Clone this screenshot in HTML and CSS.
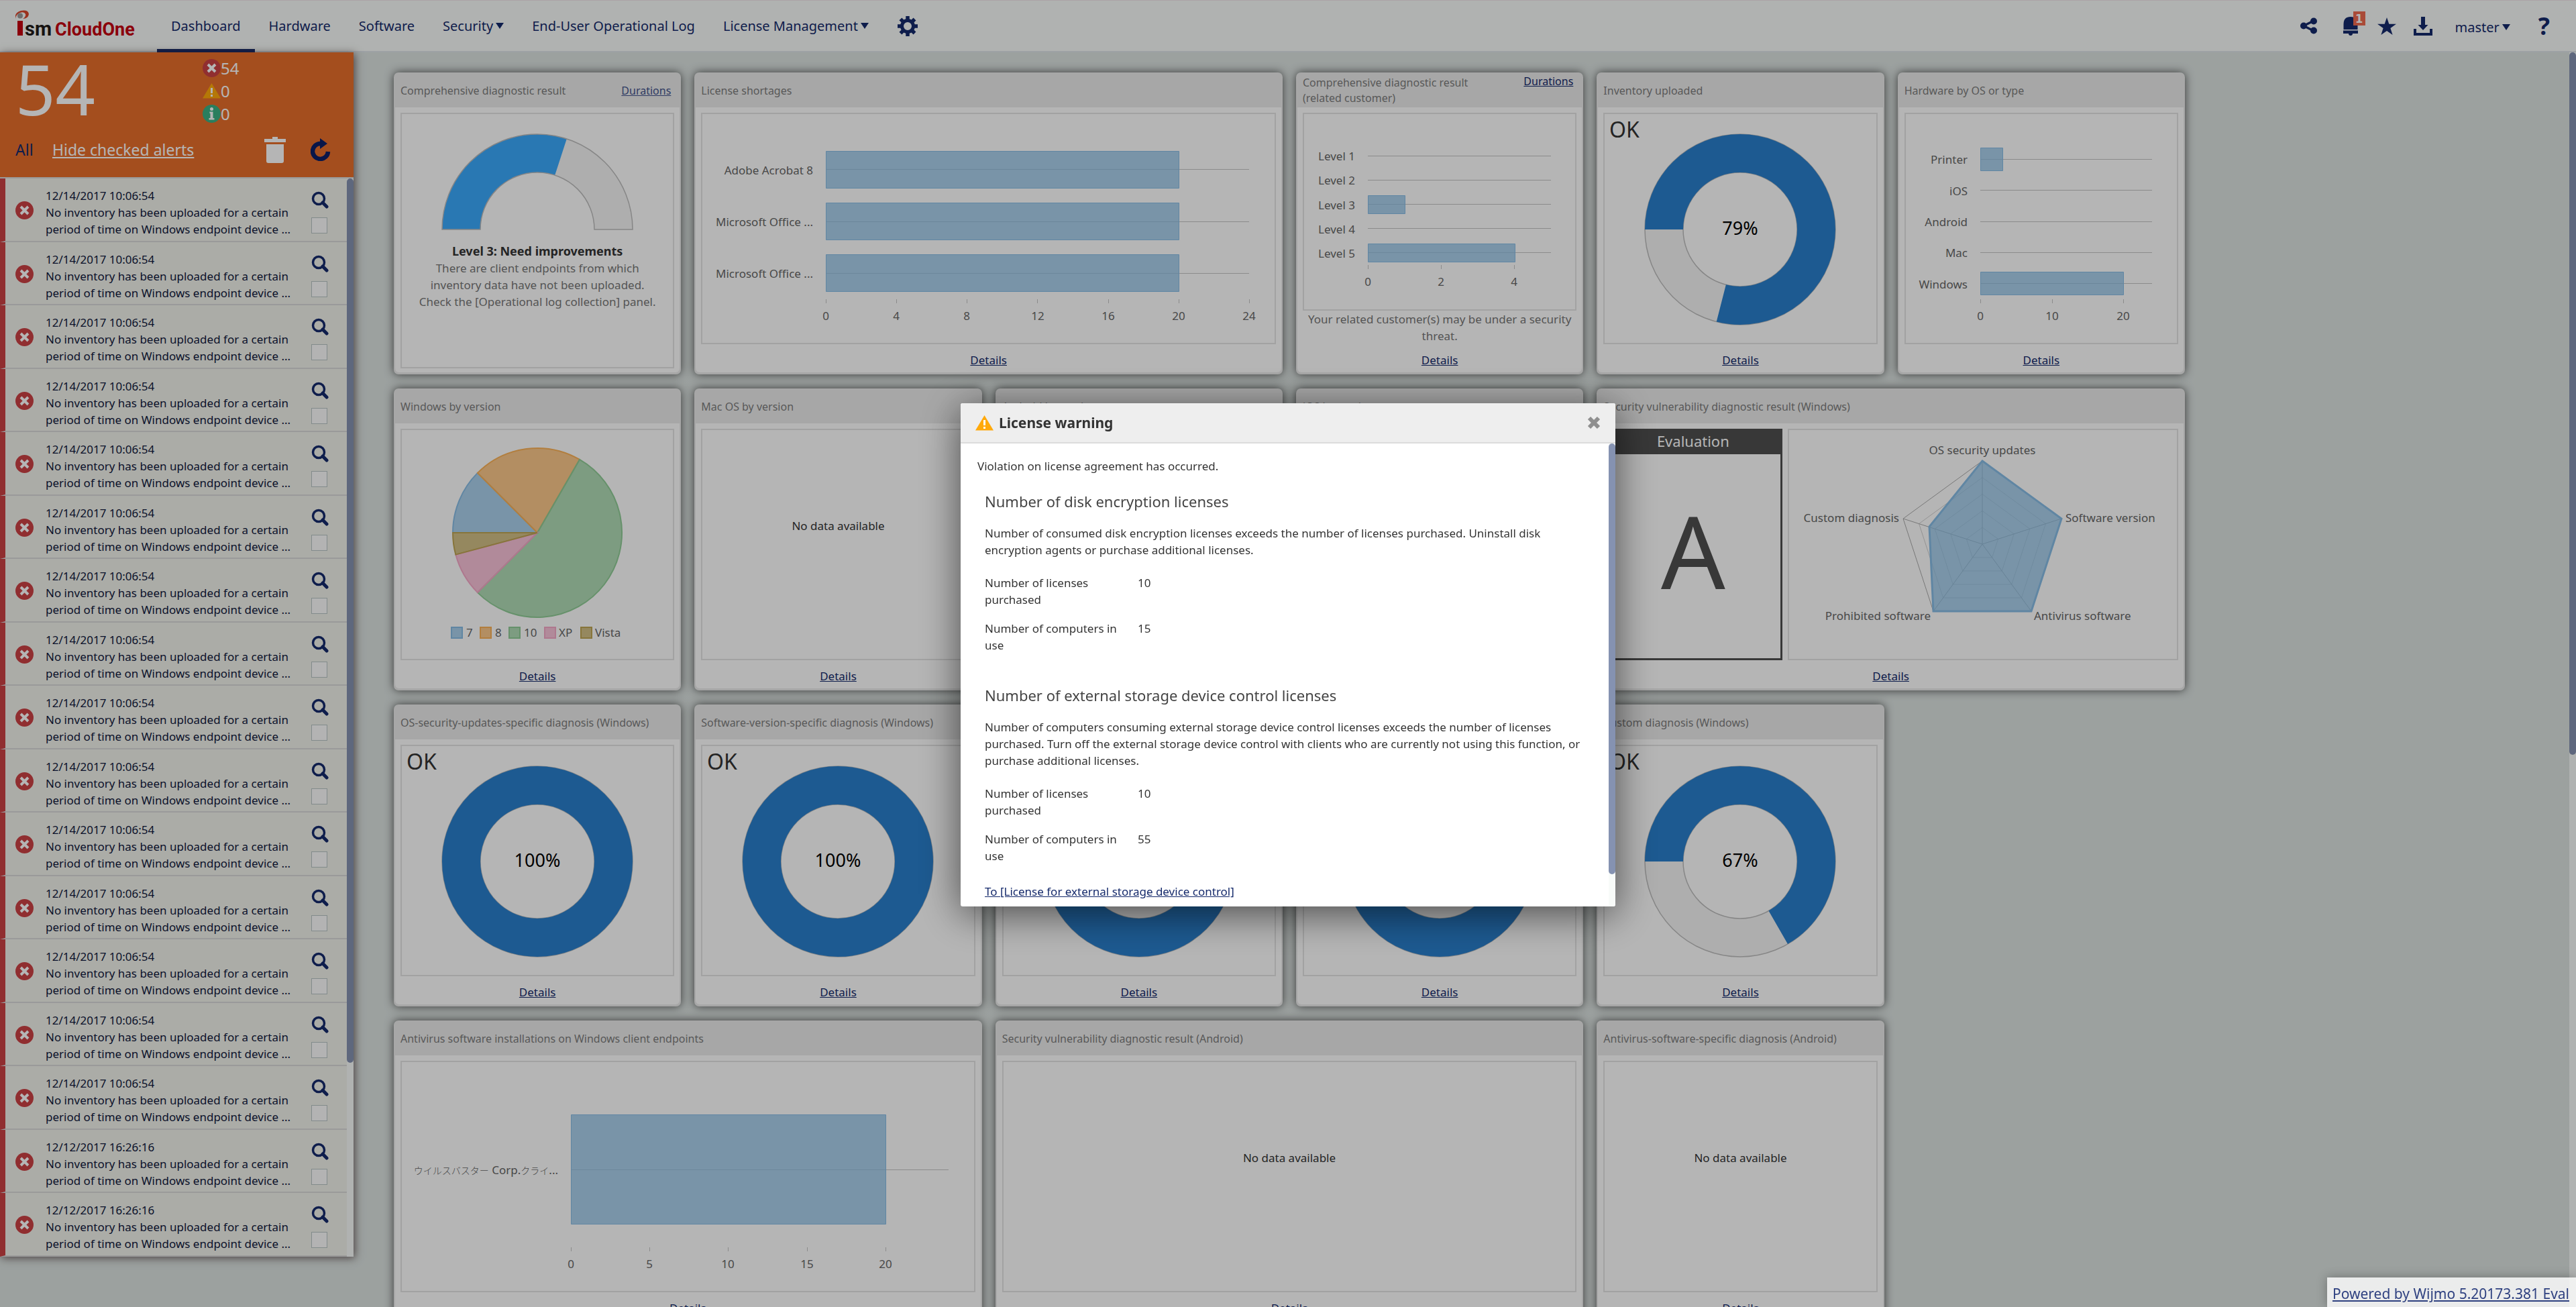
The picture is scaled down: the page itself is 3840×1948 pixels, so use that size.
FILE: index.html
```html
<!DOCTYPE html>
<html lang="en">
<head>
<meta charset="utf-8">
<title>ISM CloudOne - Dashboard</title>
<link rel="stylesheet" href="styles.css">
</head>
<body>
<svg class="sprite" aria-hidden="true">
  <symbol id="i-error" viewBox="0 0 27 27"><circle cx="13.5" cy="13.5" r="13.5" fill="#cb4144"/><path d="M8 8l11 11M19 8L8 19" stroke="#fff" stroke-width="4"/></symbol>
  <symbol id="i-warn" viewBox="0 0 27 27"><path d="M13.500 2L27 24.500H0z" fill="#ffa90a"/><path d="M13.500 9v8M13.500 19v3" stroke="#fff" stroke-width="3"/></symbol>
  <symbol id="i-info" viewBox="0 0 27 27"><circle cx="13.5" cy="13.5" r="13.500" fill="#3cb285"/><path d="M10.500 10.500H15.500V20H17.500V22.500H9.500V20H11.500V13H10.500z" fill="#fff"/><circle cx="13.500" cy="6.500" r="2.500" fill="#fff"/></symbol>
  <symbol id="i-trash" viewBox="0 0 32 39"><path d="M0 3h12V0h8v3h12v5H0zM3 11h26v25q0 3-3 3H6q-3 0-3-3z" fill="#fff"/></symbol>
  <symbol id="i-refresh" viewBox="0 0 30 34"><path d="M26 20A11.500 11.500 0 1 1 15 8" fill="none" stroke="#0e2068" stroke-width="6.500"/><path d="M14 0L25 8L14 16z" fill="#0e2068"/></symbol>
  <symbol id="i-search" viewBox="0 0 26 26"><circle cx="11" cy="11" r="8.500" fill="none" stroke="#152a6b" stroke-width="3.500"/><path d="M17 17l6 6" stroke="#152a6b" stroke-width="5" stroke-linecap="round"/></symbol>
  <symbol id="i-gear" viewBox="0 0 32 32"><circle cx="16" cy="16" r="8.500" fill="none" stroke="#152a6b" stroke-width="5"/><g stroke="#152a6b" stroke-width="5.500"><path d="M16 1v5M16 26v5M1 16h5M26 16h5M5.400 5.400l3.500 3.500M23 23l3.500 3.500M5.400 26.600l3.500-3.500M23 9l3.500-3.500"/></g></symbol>
  <symbol id="i-share" viewBox="0 0 28 28"><path d="M23 5L6 13.500L23 22" fill="none" stroke="#152a6b" stroke-width="3.500"/><g fill="#152a6b"><circle cx="6" cy="13.500" r="5"/><circle cx="21" cy="6.500" r="5"/><circle cx="21" cy="20.500" r="5"/></g></symbol>
  <symbol id="i-bell" viewBox="0 0 28 28"><path d="M3.500 19V11Q3.500 0 14 0T24.500 11V19zM3 20.500H25V25H17Q17 28 14 28T11 25H3z" fill="#152a6b"/></symbol>
  <symbol id="i-star" viewBox="0 0 28 28"><path d="M14 1l3.300 9.700L28 10.800l-8.600 6.300L22.600 27 14 21 5.400 27l3.200-9.900L0 10.800l10.700-.1z" fill="#152a6b"/></symbol>
  <symbol id="i-download" viewBox="0 0 28 28"><path d="M11 0h6v12h4.500L14 20 6.500 12H11zM0 18h4v6h20v-6h4v10H0z" fill="#152a6b"/></symbol>
  <symbol id="i-close" viewBox="0 0 20 20"><path d="M3 3l14 14M17 3L3 17" stroke="#8f8f8f" stroke-width="6"/></symbol>
  <symbol id="ring" viewBox="0 0 404 341"><circle cx="202" cy="172" r="113.500" fill="none" stroke="#f5f5f5" stroke-width="57"/><g fill="none" stroke="#bdbdbd" stroke-width="1.500"><circle cx="202" cy="172" r="142"/><circle cx="202" cy="172" r="85"/></g></symbol>
</svg>

<header class="topbar">
  <a class="logo" href="#" aria-label="ISM CloudOne">
    <svg width="20" height="38" viewBox="0 0 20 38" aria-hidden="true"><path d="M0 13Q-2 4 8 1Q19-1 20 6Q19 13 11 13Q16 10 15 6Q13 2 7 4Q1 6 0 13z" fill="#d9452b"/><circle cx="7" cy="8.500" r="4" fill="#9a9a9a"/><rect x="3" y="16" width="8" height="22" fill="#c40010"/></svg>
    <span class="logo-sm">sm</span><span class="logo-name">CloudOne</span>
  </a>
  <nav class="nav">
    <a class="active" href="#">Dashboard</a>
    <a href="#">Hardware</a>
    <a href="#">Software</a>
    <a href="#">Security<i class="caret"></i></a>
    <a href="#">End-User Operational Log</a>
    <a href="#">License Management<i class="caret"></i></a>
    <a href="#" class="gear" aria-label="Settings"><svg width="32" height="32"><use href="#i-gear"/></svg></a>
  </nav>
  <div class="tools">
    <button aria-label="Share"><svg width="28" height="28"><use href="#i-share"/></svg></button>
    <button class="bell" aria-label="Notifications"><svg width="28" height="28"><use href="#i-bell"/></svg><span class="badge">1</span></button>
    <button aria-label="Favorites"><svg width="28" height="28"><use href="#i-star"/></svg></button>
    <button aria-label="Downloads"><svg width="28" height="28"><use href="#i-download"/></svg></button>
    <button class="user">master<i class="caret"></i></button>
    <button class="help" aria-label="Help">?</button>
  </div>
</header>

<div class="workspace">
  <aside class="sidebar">
    <div class="summary">
      <div class="summary-top">
        <strong class="total">54</strong>
        <ul class="counts">
          <li><svg width="27" height="27"><use href="#i-error"/></svg>54</li>
          <li><svg width="27" height="27"><use href="#i-warn"/></svg>0</li>
          <li><svg width="27" height="27"><use href="#i-info"/></svg>0</li>
        </ul>
      </div>
      <div class="summary-actions">
        <span class="all">All</span>
        <a class="hide" href="#">Hide checked alerts</a>
        <button aria-label="Delete"><svg width="32" height="39"><use href="#i-trash"/></svg></button>
        <button aria-label="Refresh"><svg width="30" height="34"><use href="#i-refresh"/></svg></button>
      </div>
    </div>
    <div class="alerts-wrap">
      <ul class="alerts">
        <li><svg class="state" width="27" height="27"><use href="#i-error"/></svg><p>12/14/2017 10:06:54<br>No inventory has been uploaded for a certain<br>period of time on Windows endpoint device ...</p><div class="ops"><button aria-label="View"><svg width="26" height="26"><use href="#i-search"/></svg></button><input type="checkbox" aria-label="Checked"></div></li>
        <li><svg class="state" width="27" height="27"><use href="#i-error"/></svg><p>12/14/2017 10:06:54<br>No inventory has been uploaded for a certain<br>period of time on Windows endpoint device ...</p><div class="ops"><button aria-label="View"><svg width="26" height="26"><use href="#i-search"/></svg></button><input type="checkbox" aria-label="Checked"></div></li>
        <li><svg class="state" width="27" height="27"><use href="#i-error"/></svg><p>12/14/2017 10:06:54<br>No inventory has been uploaded for a certain<br>period of time on Windows endpoint device ...</p><div class="ops"><button aria-label="View"><svg width="26" height="26"><use href="#i-search"/></svg></button><input type="checkbox" aria-label="Checked"></div></li>
        <li><svg class="state" width="27" height="27"><use href="#i-error"/></svg><p>12/14/2017 10:06:54<br>No inventory has been uploaded for a certain<br>period of time on Windows endpoint device ...</p><div class="ops"><button aria-label="View"><svg width="26" height="26"><use href="#i-search"/></svg></button><input type="checkbox" aria-label="Checked"></div></li>
        <li><svg class="state" width="27" height="27"><use href="#i-error"/></svg><p>12/14/2017 10:06:54<br>No inventory has been uploaded for a certain<br>period of time on Windows endpoint device ...</p><div class="ops"><button aria-label="View"><svg width="26" height="26"><use href="#i-search"/></svg></button><input type="checkbox" aria-label="Checked"></div></li>
        <li><svg class="state" width="27" height="27"><use href="#i-error"/></svg><p>12/14/2017 10:06:54<br>No inventory has been uploaded for a certain<br>period of time on Windows endpoint device ...</p><div class="ops"><button aria-label="View"><svg width="26" height="26"><use href="#i-search"/></svg></button><input type="checkbox" aria-label="Checked"></div></li>
        <li><svg class="state" width="27" height="27"><use href="#i-error"/></svg><p>12/14/2017 10:06:54<br>No inventory has been uploaded for a certain<br>period of time on Windows endpoint device ...</p><div class="ops"><button aria-label="View"><svg width="26" height="26"><use href="#i-search"/></svg></button><input type="checkbox" aria-label="Checked"></div></li>
        <li><svg class="state" width="27" height="27"><use href="#i-error"/></svg><p>12/14/2017 10:06:54<br>No inventory has been uploaded for a certain<br>period of time on Windows endpoint device ...</p><div class="ops"><button aria-label="View"><svg width="26" height="26"><use href="#i-search"/></svg></button><input type="checkbox" aria-label="Checked"></div></li>
        <li><svg class="state" width="27" height="27"><use href="#i-error"/></svg><p>12/14/2017 10:06:54<br>No inventory has been uploaded for a certain<br>period of time on Windows endpoint device ...</p><div class="ops"><button aria-label="View"><svg width="26" height="26"><use href="#i-search"/></svg></button><input type="checkbox" aria-label="Checked"></div></li>
        <li><svg class="state" width="27" height="27"><use href="#i-error"/></svg><p>12/14/2017 10:06:54<br>No inventory has been uploaded for a certain<br>period of time on Windows endpoint device ...</p><div class="ops"><button aria-label="View"><svg width="26" height="26"><use href="#i-search"/></svg></button><input type="checkbox" aria-label="Checked"></div></li>
        <li><svg class="state" width="27" height="27"><use href="#i-error"/></svg><p>12/14/2017 10:06:54<br>No inventory has been uploaded for a certain<br>period of time on Windows endpoint device ...</p><div class="ops"><button aria-label="View"><svg width="26" height="26"><use href="#i-search"/></svg></button><input type="checkbox" aria-label="Checked"></div></li>
        <li><svg class="state" width="27" height="27"><use href="#i-error"/></svg><p>12/14/2017 10:06:54<br>No inventory has been uploaded for a certain<br>period of time on Windows endpoint device ...</p><div class="ops"><button aria-label="View"><svg width="26" height="26"><use href="#i-search"/></svg></button><input type="checkbox" aria-label="Checked"></div></li>
        <li><svg class="state" width="27" height="27"><use href="#i-error"/></svg><p>12/14/2017 10:06:54<br>No inventory has been uploaded for a certain<br>period of time on Windows endpoint device ...</p><div class="ops"><button aria-label="View"><svg width="26" height="26"><use href="#i-search"/></svg></button><input type="checkbox" aria-label="Checked"></div></li>
        <li><svg class="state" width="27" height="27"><use href="#i-error"/></svg><p>12/14/2017 10:06:54<br>No inventory has been uploaded for a certain<br>period of time on Windows endpoint device ...</p><div class="ops"><button aria-label="View"><svg width="26" height="26"><use href="#i-search"/></svg></button><input type="checkbox" aria-label="Checked"></div></li>
        <li><svg class="state" width="27" height="27"><use href="#i-error"/></svg><p>12/14/2017 10:06:54<br>No inventory has been uploaded for a certain<br>period of time on Windows endpoint device ...</p><div class="ops"><button aria-label="View"><svg width="26" height="26"><use href="#i-search"/></svg></button><input type="checkbox" aria-label="Checked"></div></li>
        <li><svg class="state" width="27" height="27"><use href="#i-error"/></svg><p>12/12/2017 16:26:16<br>No inventory has been uploaded for a certain<br>period of time on Windows endpoint device ...</p><div class="ops"><button aria-label="View"><svg width="26" height="26"><use href="#i-search"/></svg></button><input type="checkbox" aria-label="Checked"></div></li>
        <li><svg class="state" width="27" height="27"><use href="#i-error"/></svg><p>12/12/2017 16:26:16<br>No inventory has been uploaded for a certain<br>period of time on Windows endpoint device ...</p><div class="ops"><button aria-label="View"><svg width="26" height="26"><use href="#i-search"/></svg></button><input type="checkbox" aria-label="Checked"></div></li>
      </ul>
      <div class="scroll"><div class="thumb thumb-alerts"></div></div>
    </div>
  </aside>

  <main class="board">
    <section class="card">
      <header><h2>Comprehensive diagnostic result</h2><a class="faded" href="#">Durations</a></header>
      <div class="card-body">
        <div class="panel gauge">
          <svg width="404" height="190" viewBox="0 0 404 190">
            <path d="M88.500 172A113.500 113.500 0 0 1 315.500 172" fill="none" stroke="#f5f5f5" stroke-width="57"/>
            <path d="M88.500 172A113.500 113.500 0 0 1 237 64" fill="none" stroke="#3ba9fd" stroke-width="57"/>
            <path d="M60 172A142 142 0 0 1 344 172H287A85 85 0 0 0 117 172z" fill="none" stroke="#bdbdbd" stroke-width="1.500"/>
          </svg>
          <p><strong>Level 3: Need improvements</strong><br>There are client endpoints from which<br>inventory data have not been uploaded.<br>Check the [Operational log collection] panel.</p>
        </div>
      </div>
    </section>

    <section class="card wide">
      <header><h2>License shortages</h2></header>
      <div class="card-body">
        <div class="panel">
          <svg class="chart" width="852" height="341" viewBox="0 0 852 341">
            <path class="line" d="M184 82.500H815M184 160.500H815M184 237.500H815"/>
            <path class="bar" d="M184.500 55.500H710.500V110.500H184.500zM184.500 132.500H710.500V187.500H184.500zM184.500 209.500H710.500V264.500H184.500z"/>
            <path class="line" d="M184.500 276v6M289.500 276v6M394.500 276v6M499.500 276v6M605.500 276v6M710.500 276v6M815.500 276v6"/>
            <g class="end"><text x="165" y="90">Adobe Acrobat 8</text><text x="165" y="167">Microsoft Office ...</text><text x="165" y="244">Microsoft Office ...</text></g>
            <g class="mid"><text x="184" y="307">0</text><text x="289" y="307">4</text><text x="394" y="307">8</text><text x="500" y="307">12</text><text x="605" y="307">16</text><text x="710" y="307">20</text><text x="815" y="307">24</text></g>
          </svg>
        </div>
        <footer><a href="#">Details</a></footer>
      </div>
    </section>

    <section class="card">
      <header class="two-line"><h2>Comprehensive diagnostic result<br>(related customer)</h2><a href="#">Durations</a></header>
      <div class="card-body">
        <div class="panel">
          <svg class="chart" width="404" height="289" viewBox="0 0 404 289">
            <path class="line" d="M95 62.500H368M95 98.500H368M95 134.500H368M95 170.500H368M95 206.500H368"/>
            <path class="bar" d="M95.500 121.500H150.500V148.500H95.500zM95.500 193.500H314.500V220.500H95.500z"/>
            <path class="line" d="M95.500 225v6M204.500 225v6M313.500 225v6"/>
            <g class="end"><text x="76" y="69">Level 1</text><text x="76" y="105">Level 2</text><text x="76" y="142">Level 3</text><text x="76" y="178">Level 4</text><text x="76" y="214">Level 5</text></g>
            <g class="mid"><text x="95" y="256">0</text><text x="204" y="256">2</text><text x="313" y="256">4</text></g>
          </svg>
        </div>
        <p class="note">Your related customer(s) may be under a security threat.</p>
        <footer><a href="#">Details</a></footer>
      </div>
    </section>

    <section class="card">
      <header><h2>Inventory uploaded</h2></header>
      <div class="card-body">
        <div class="panel">
          <svg class="chart" width="404" height="341" viewBox="0 0 404 341"><use href="#ring"/>
            <circle class="fill" cx="202" cy="172" r="113.500" pathLength="100" stroke-dasharray="79 100" transform="rotate(180 202 172)"/>
            <text class="ok" x="7" y="35">OK</text><text class="pct" x="202" y="180">79%</text></svg>
        </div>
        <footer><a href="#">Details</a></footer>
      </div>
    </section>

    <section class="card">
      <header><h2>Hardware by OS or type</h2></header>
      <div class="card-body">
        <div class="panel">
          <svg class="chart" width="404" height="341" viewBox="0 0 404 341">
            <path class="line" d="M111 67.500H367M111 113.500H367M111 160.500H367M111 206.500H367M111 252.500H367"/>
            <path class="bar" d="M111.500 50.500H144.500V84.500H111.500zM111.500 235.500H324.500V269.500H111.500z"/>
            <path class="line" d="M111.500 276v6M218.500 276v6M324.500 276v6"/>
            <g class="end"><text x="92" y="74">Printer</text><text x="92" y="121">iOS</text><text x="92" y="167">Android</text><text x="92" y="213">Mac</text><text x="92" y="260">Windows</text></g>
            <g class="mid"><text x="111" y="307">0</text><text x="218" y="307">10</text><text x="324" y="307">20</text></g>
          </svg>
        </div>
        <footer><a href="#">Details</a></footer>
      </div>
    </section>

    <section class="card">
      <header><h2>Windows by version</h2></header>
      <div class="card-body">
        <div class="panel">
          <svg class="chart" width="404" height="341" viewBox="0 0 404 341">
            <g class="pie">
              <path class="c1" d="M202 153L76 153A126 126 0 0 1 112.900 63.900z"/>
              <path class="c2" d="M202 153L112.900 63.900A126 126 0 0 1 265 43.900z"/>
              <path class="c3" d="M202 153L265 43.900A126 126 0 1 1 112.900 242.100z"/>
              <path class="c4" d="M202 153L112.900 242.100A126 126 0 0 1 80.300 185.600z"/>
              <path class="c5" d="M202 153L80.300 185.600A126 126 0 0 1 76 153z"/>
              <rect class="c1" x="74" y="294" width="16" height="16"/><rect class="c2" x="117" y="294" width="16" height="16"/><rect class="c3" x="160" y="294" width="16" height="16"/><rect class="c4" x="213" y="294" width="16" height="16"/><rect class="c5" x="267" y="294" width="16" height="16"/>
            </g>
            <text x="96" y="308">7</text><text x="139" y="308">8</text><text x="182" y="308">10</text><text x="234" y="308">XP</text><text x="288" y="308">Vista</text>
          </svg>
        </div>
        <footer><a href="#">Details</a></footer>
      </div>
    </section>

    <section class="card">
      <header><h2>Mac OS by version</h2></header>
      <div class="card-body"><div class="panel empty">No data available</div><footer><a href="#">Details</a></footer></div>
    </section>
    <section class="card">
      <header><h2>Android by version</h2></header>
      <div class="card-body"><div class="panel"></div></div>
    </section>
    <section class="card">
      <header><h2>iOS by version</h2></header>
      <div class="card-body"><div class="panel"></div></div>
    </section>

    <section class="card wide">
      <header><h2>Security vulnerability diagnostic result (Windows)</h2></header>
      <div class="card-body">
        <div class="split">
          <div class="grade"><h3>Evaluation</h3><strong>A</strong></div>
          <div class="panel">
            <svg class="chart" width="576" height="341" viewBox="0 0 576 341">
              <g class="web" transform="translate(288 170)">
                <path class="edge" d="M0-124L118-38L73 100L-73 100L-118-38z"/>
                <path class="inner" d="M0-99.200L94.400-30.400L58.400 80L-58.400 80L-94.400-30.400zM0-74.400L70.800-22.800L43.800 60L-43.800 60L-70.800-22.800zM0-49.600L47.200-15.200L29.200 40L-29.200 40L-47.200-15.200zM0-24.800L23.600-7.600L14.600 20L-14.600 20L-23.600-7.600z"/>
                <path class="spoke" d="M0 0V-124M0 0L118-38M0 0L73 100M0 0L-73 100M0 0L-118-38"/>
                <path class="area" d="M0-124L118-38L73 100L-73 100L-79-26z"/>
              </g>
              <text class="m" x="288" y="36">OS security updates</text>
              <text x="412" y="137">Software version</text><text x="365" y="283">Antivirus software</text>
              <g class="end"><text x="211" y="283">Prohibited software</text><text x="164" y="137">Custom diagnosis</text></g>
            </svg>
          </div>
        </div>
        <footer><a href="#">Details</a></footer>
      </div>
    </section>

    <section class="card">
      <header><h2>OS-security-updates-specific diagnosis (Windows)</h2></header>
      <div class="card-body">
        <div class="panel"><svg class="chart" width="404" height="341" viewBox="0 0 404 341"><use href="#ring"/><circle class="fill" cx="202" cy="172" r="113.500"/><text class="ok" x="7" y="35">OK</text><text class="pct" x="202" y="180">100%</text></svg></div>
        <footer><a href="#">Details</a></footer>
      </div>
    </section>
    <section class="card">
      <header><h2>Software-version-specific diagnosis (Windows)</h2></header>
      <div class="card-body">
        <div class="panel"><svg class="chart" width="404" height="341" viewBox="0 0 404 341"><use href="#ring"/><circle class="fill" cx="202" cy="172" r="113.500"/><text class="ok" x="7" y="35">OK</text><text class="pct" x="202" y="180">100%</text></svg></div>
        <footer><a href="#">Details</a></footer>
      </div>
    </section>
    <section class="card">
      <header></header>
      <div class="card-body">
        <div class="panel"><svg class="chart" width="404" height="341" viewBox="0 0 404 341"><use href="#ring"/><circle class="fill" cx="202" cy="172" r="113.500"/></svg></div>
        <footer><a href="#">Details</a></footer>
      </div>
    </section>
    <section class="card">
      <header></header>
      <div class="card-body">
        <div class="panel"><svg class="chart" width="404" height="341" viewBox="0 0 404 341"><use href="#ring"/><circle class="fill" cx="202" cy="172" r="113.500"/></svg></div>
        <footer><a href="#">Details</a></footer>
      </div>
    </section>
    <section class="card">
      <header><h2>Custom diagnosis (Windows)</h2></header>
      <div class="card-body">
        <div class="panel"><svg class="chart" width="404" height="341" viewBox="0 0 404 341"><use href="#ring"/><circle class="fill" cx="202" cy="172" r="113.500" pathLength="300" stroke-dasharray="200 300" transform="rotate(180 202 172)"/><text class="ok" x="7" y="35">OK</text><text class="pct" x="202" y="180">67%</text></svg></div>
        <footer><a href="#">Details</a></footer>
      </div>
    </section>

    <section class="card wide first">
      <header><h2>Antivirus software installations on Windows client endpoints</h2></header>
      <div class="card-body">
        <div class="panel">
          <svg class="chart" width="852" height="341" viewBox="0 0 852 341">
            <path class="line" d="M252 160.500H815"/>
            <path class="bar" d="M252.500 78.500H721.500V241.500H252.500z"/>
            <path class="line" d="M252.500 276v6M369.500 276v6M486.500 276v6M604.500 276v6M721.500 276v6"/>
            <g class="end"><text x="233" y="167"><tspan class="jp">ウイルスバスター</tspan> Corp.<tspan class="jp">クライ</tspan>...</text></g>
            <g class="mid"><text x="252" y="307">0</text><text x="369" y="307">5</text><text x="486" y="307">10</text><text x="604" y="307">15</text><text x="721" y="307">20</text></g>
          </svg>
        </div>
        <footer><a href="#">Details</a></footer>
      </div>
    </section>
    <section class="card wide">
      <header><h2>Security vulnerability diagnostic result (Android)</h2></header>
      <div class="card-body"><div class="panel empty">No data available</div><footer><a href="#">Details</a></footer></div>
    </section>
    <section class="card">
      <header><h2>Antivirus-software-specific diagnosis (Android)</h2></header>
      <div class="card-body"><div class="panel empty">No data available</div><footer><a href="#">Details</a></footer></div>
    </section>
  </main>
  <div class="scroll"><div class="thumb thumb-board"></div></div>
</div>

<div class="overlay">
  <div class="modal" role="dialog" aria-modal="true" aria-labelledby="modal-title">
    <header class="modal-head">
      <svg width="27" height="27" aria-hidden="true"><use href="#i-warn"/></svg>
      <h2 id="modal-title">License warning</h2>
      <button aria-label="Close"><svg width="20" height="20"><use href="#i-close"/></svg></button>
    </header>
    <div class="modal-main">
      <div class="modal-text">
        <p>Violation on license agreement has occurred.</p>
        <section>
          <h3>Number of disk encryption licenses</h3>
          <p>Number of consumed disk encryption licenses exceeds the number of licenses purchased. Uninstall disk encryption agents or purchase additional licenses.</p>
          <dl><dt>Number of licenses purchased</dt><dd>10</dd><dt>Number of computers in use</dt><dd>15</dd></dl>
        </section>
        <section>
          <h3>Number of external storage device control licenses</h3>
          <p>Number of computers consuming external storage device control licenses exceeds the number of licenses purchased. Turn off the external storage device control with clients who are currently not using this function, or purchase additional licenses.</p>
          <dl><dt>Number of licenses purchased</dt><dd>10</dd><dt>Number of computers in use</dt><dd>55</dd></dl>
          <a class="go" href="#">To [License for external storage device control]</a>
        </section>
      </div>
      <div class="scroll"><div class="thumb thumb-modal"></div></div>
    </div>
  </div>
</div>
<a class="powered" href="#">Powered by Wijmo 5.20173.381 Eval</a>
</body>
</html>
```
FILE: styles.css
```css
* { box-sizing: border-box; }
body {
  margin: 0;
  height: 100vh;
  display: flex;
  flex-direction: column;
  overflow: hidden;
  background: #dce3e1;
  color: #333;
  font: 17px/25px "Noto Sans", "DejaVu Sans Condensed", "Noto Sans CJK JP", sans-serif;
}
h2, h3, p, ul, dl, dd { margin: 0; padding: 0; font-weight: normal; }
ul { list-style: none; }
svg { display: block; flex: none; }
button { display: block; padding: 0; border: 0; background: none; font: inherit; color: inherit; }
a { color: #152a6b; }
.sprite { position: absolute; width: 0; height: 0; }

/* top bar */
.topbar {
  flex: none;
  height: 78px;
  display: flex;
  align-items: stretch;
  background: #f8fbf9;
  border-top: 1px solid #f3e6ea;
  border-bottom: 2px solid #dde3e8;
  color: #152a6b;
  font-size: 20px;
}
.logo {
  width: 210px;
  padding: 14px 0 0 23px;
  display: flex;
  align-items: baseline;
  text-decoration: none;
  font-family: Roboto, sans-serif;
  font-weight: bold;
  line-height: 36px;
}
.logo-sm { margin-left: -6px; font-size: 29px; color: #211a18; }
.logo-name { margin-left: 5px; font-size: 27px; color: #c40010; }
.nav { display: flex; margin-left: 24px; }
.nav a {
  padding: 3px 21px 0;
  margin-bottom: -2px;
  display: flex;
  align-items: center;
  text-decoration: none;
  border-bottom: 5px solid transparent;
}
.nav .active { border-color: #152a6b; }
.caret {
  margin-left: 4px;
  border: 6px solid transparent;
  border-top: 9px solid #152a6b;
  border-bottom: 0;
}
.tools { margin-left: auto; padding: 0 39px 0 0; display: flex; align-items: center; }
.tools button { position: relative; margin-right: 26px; }
.tools button:first-child { margin-right: 34px; }
.tools .user { margin: 3px 42px 0 8px; display: flex; align-items: center; }
.tools .help { margin: 0; font-size: 36px; font-weight: bold; }
.badge {
  position: absolute;
  top: -8px;
  right: -8px;
  width: 18px;
  background: #ef6a50;
  color: #fff;
  font: bold 18px/21px "DejaVu Sans Condensed", sans-serif;
}

/* work area */
.workspace { flex: 1; min-height: 0; display: flex; align-items: flex-start; }
.scroll { flex: none; width: 10px; align-self: stretch; background: #f8fbf9; }
.thumb { background: #8592b1; border-radius: 5px; }
.thumb-board { height: 56%; }
.thumb-alerts { height: 82%; }
.thumb-modal { height: 93%; }

/* alerts */
.sidebar { flex: none; width: 527px; box-shadow: 2px 2px 12px rgba(60, 40, 40, .7); }
.summary { height: 186px; padding: 6px 34px 0 23px; background: #e86f2b; color: #fff; font-size: 24px; }
.summary-top { display: grid; grid-template-columns: 279px 1fr; align-items: start; }
.total { font-size: 104px; line-height: 95px; font-weight: normal; }
.counts li { height: 34px; display: flex; align-items: center; }
.summary-actions { margin-top: 17px; height: 40px; display: flex; align-items: center; font-size: 23px; }
.all { color: #152a6b; width: 55px; }
.hide { color: #fff; margin-right: auto; }
.summary-actions button { margin-left: 37px; }
.alerts-wrap { display: flex; border-top: 2px solid #dadada; }
.alerts { flex: 1; color: #10183c; }
.alerts li {
  display: flex;
  padding: 13px 0 5px 15px;
  background: #f1f2eb;
  border-left: 8px solid #cb4144;
  border-bottom: 2px solid #dadada;
}
.alerts li:nth-child(even) { padding-bottom: 4px; }
.state { margin: 21px 18px 0 0; }
.ops { margin: 6px 28px 0 auto; width: 25px; }
.ops input {
  appearance: none;
  display: block;
  margin: 13px 0 0;
  width: 24px;
  height: 24px;
  background: #fdfdfd;
  border: 1px solid #b8c4c4;
}

/* dashboard */
.board {
  flex: 1;
  align-self: stretch;
  overflow: hidden;
  padding: 30px 573px 0 60px;
  display: grid;
  grid-template-columns: repeat(6, 1fr);
  grid-auto-rows: max-content;
  gap: 21px 20px;
}
.card {
  min-width: 0;
  min-height: 450px;
  display: flex;
  flex-direction: column;
  background: #ececec;
  border-radius: 7px;
  box-shadow: 0 0 14px rgba(40, 40, 40, .8);
}
.wide { grid-column: span 2; }
.first { grid-column: 1 / span 2; }
.card > header {
  height: 52px;
  padding: 2px 15px 0 10px;
  display: flex;
  align-items: center;
  justify-content: space-between;
  font-size: 16px;
  line-height: 23px;
}
.card h2 { font-size: inherit; color: #7d7d7d; white-space: nowrap; }
.faded { color: #44548c; }
.two-line a { align-self: flex-start; }
.card-body {
  flex: 1;
  margin: 0 2px 3px;
  padding: 8px 8px 6px;
  display: flex;
  flex-direction: column;
  background: #fff;
  border-radius: 0 0 6px 6px;
  text-align: center;
}
.panel { flex: 1; border: 2px solid #e4e4e4; min-height: 0; }
.card footer { padding-top: 11px; }
.note { color: #777; }
.gauge p { padding-top: 2px; color: #777; }
.gauge strong { color: #333; font-size: 18px; }
.empty { padding-top: 130px; }
.split { flex: 1; display: flex; gap: 8px; }
.grade { width: 267px; border: 3px solid #4f4f4f; display: flex; flex-direction: column; color: #4f4f4f; }
.grade h3 { background: #4f4f4f; color: #fff; font-size: 22px; line-height: 31px; padding-bottom: 4px; }
.grade strong { flex: 1; font-size: 150px; font-weight: normal; line-height: 286px; }

/* charts */
.chart text { font-size: 17px; fill: #666; }
.chart .end text { text-anchor: end; }
.chart .mid text, .chart .m { text-anchor: middle; }
.chart .jp { font-family: "Noto Sans CJK JP", sans-serif; font-size: 14px; font-weight: 300; }
.chart .ok { font-size: 32px; fill: #333; }
.chart .pct { font-size: 27px; fill: #000; text-anchor: middle; }
.line { stroke: #c4c4c4; fill: none; }
.bar, .area { fill: #88bde6; fill-opacity: .7; stroke: #88bde6; }
.fill { fill: none; stroke: #297fcc; stroke-width: 57; }
.pie { fill-opacity: .7; stroke-width: 2; }
.c1 { fill: #88bde6; stroke: #88bde6; }
.c2 { fill: #fbb258; stroke: #fbb258; }
.c3 { fill: #90cd97; stroke: #90cd97; }
.c4 { fill: #f6aac9; stroke: #f6aac9; }
.c5 { fill: #bfa554; stroke: #bfa554; }
.web path { fill: none; }
.web .edge, .web .spoke { stroke: #a9a9a9; }
.web .inner { stroke: #d0d0d0; }
.web .area { fill: #88bde6; stroke-width: 3; }

/* dialog */
.overlay {
  position: fixed;
  inset: 0;
  padding-top: 4px;
  display: grid;
  place-items: center;
  background: rgba(0, 0, 0, .29);
}
.modal {
  width: 976px;
  height: 750px;
  display: flex;
  flex-direction: column;
  background: #fff;
  border-radius: 3px;
  overflow: hidden;
  box-shadow: 0 10px 60px rgba(0, 0, 0, .6);
}
.modal-head {
  flex: none;
  height: 60px;
  padding: 0 22px;
  display: flex;
  align-items: center;
  gap: 8px;
  background: #eee;
  border-bottom: 2px solid #dcdcdc;
}
.modal-head h2 { font-size: 21px; font-weight: bold; }
.modal-head button { margin-left: auto; }
.modal-main { flex: 1; min-height: 0; display: flex; }
.modal-text { flex: 1; padding: 21px 24px 0 25px; overflow: hidden; }
.modal-text section { padding: 25px 0 22px 11px; }
.modal-text h3 { font-size: 22px; line-height: 30px; margin-bottom: 20px; color: #444; }
.modal-text dl { margin-top: 24px; display: grid; grid-template-columns: 200px 1fr; gap: 18px 28px; }
.go { display: block; margin-top: 28px; }

.powered {
  position: fixed;
  right: 0;
  bottom: 0;
  padding: 4px 10px 0 8px;
  height: 44px;
  font-size: 21px;
  line-height: 40px;
  color: #2f4180;
  background: rgba(255, 255, 255, .8);
  box-shadow: 0 0 16px rgba(0, 0, 0, .3);
}
```
